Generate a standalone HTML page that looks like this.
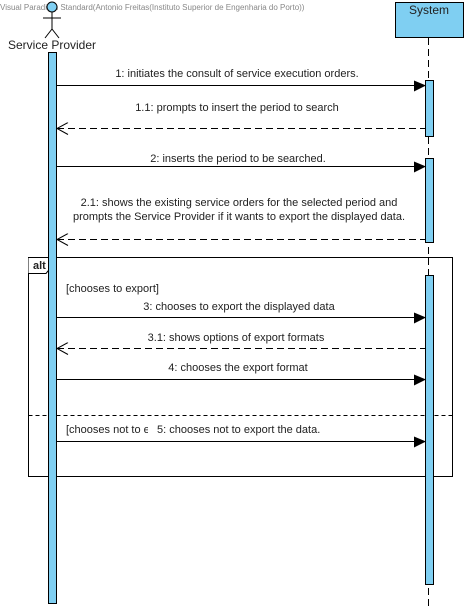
<!DOCTYPE html>
<html><head><meta charset="utf-8"><style>
html,body{margin:0;padding:0;background:#fff;width:468px;height:608px;overflow:hidden}
svg{display:block}
text{font-family:"Liberation Sans",sans-serif;font-size:11px;fill:#222}
</style></head><body>
<svg width="468" height="608" viewBox="0 0 468 608" xmlns="http://www.w3.org/2000/svg">
<defs>
<marker id="f" markerWidth="12" markerHeight="12" refX="11" refY="5" orient="auto" markerUnits="userSpaceOnUse"><path d="M0,0 L12,5 L0,11 Z" fill="#000"/></marker>
<marker id="o" markerWidth="14" markerHeight="14" refX="1" refY="6" orient="auto" markerUnits="userSpaceOnUse"><path d="M12,0 L1,6 L12,12" fill="none" stroke="#000"/></marker>
</defs>
<text x="0" y="10" style="font-size:8px;fill:#888">Visual Paradigm Standard(Antonio Freitas(Instituto Superior de Engenharia do Porto))</text>
<!-- actor -->
<circle cx="52" cy="7" r="5" fill="#7fcff2" stroke="#000"/>
<line x1="52" y1="12" x2="52" y2="29" stroke="#000"/>
<line x1="43" y1="18" x2="61" y2="18" stroke="#000"/>
<line x1="52" y1="29" x2="45" y2="38" stroke="#000"/>
<line x1="52" y1="29" x2="59" y2="38" stroke="#000"/>
<text x="52" y="49" text-anchor="middle" style="font-size:12px">Service Provider</text>
<!-- system -->
<rect x="395.5" y="2.5" width="68" height="35" fill="#7fcff2" stroke="#000"/>
<text x="429" y="14" text-anchor="middle" style="font-size:12px">System</text>
<line x1="428.5" y1="38" x2="428.5" y2="608" stroke="#000" stroke-dasharray="7,4"/>
<!-- alt frame -->
<rect x="28.5" y="257.5" width="424" height="219" fill="none" stroke="#000"/>
<path d="M28.5,257.5 H50.5 V268 L46,273.5 H28.5" fill="#fff" stroke="#000"/>
<text x="33" y="269" style="font-weight:bold">alt</text>
<line x1="28.5" y1="415.5" x2="452.5" y2="415.5" stroke="#000" stroke-dasharray="4,3"/>
<!-- activations -->
<rect x="48.5" y="52.5" width="8" height="551" fill="#7fcff2" stroke="#000"/>
<rect x="425.5" y="80.5" width="8" height="56" fill="#7fcff2" stroke="#000"/>
<rect x="425.5" y="158.5" width="8" height="84" fill="#7fcff2" stroke="#000"/>
<rect x="425.5" y="275.5" width="8" height="309" fill="#7fcff2" stroke="#000"/>
<!-- messages -->
<line x1="57" y1="85.5" x2="425" y2="85.5" stroke="#000" marker-end="url(#f)"/>
<text x="237" y="77" text-anchor="middle">1: initiates the consult of service execution orders.</text>
<line x1="57" y1="128.5" x2="425" y2="128.5" stroke="#000" stroke-dasharray="7,4" marker-start="url(#o)"/>
<text x="237" y="111" text-anchor="middle">1.1: prompts to insert the period to search</text>
<line x1="57" y1="166.5" x2="425" y2="166.5" stroke="#000" marker-end="url(#f)"/>
<text x="238" y="162" text-anchor="middle">2: inserts the period to be searched.</text>
<text x="239" y="206" text-anchor="middle">2.1: shows the existing service orders for the selected period and</text>
<text x="239" y="220" text-anchor="middle">prompts the Service Provider if it wants to export the displayed data.</text>
<line x1="57" y1="239.5" x2="425" y2="239.5" stroke="#000" stroke-dasharray="7,4" marker-start="url(#o)"/>
<text x="66" y="292">[chooses to export]</text>
<line x1="57" y1="317.5" x2="425" y2="317.5" stroke="#000" marker-end="url(#f)"/>
<text x="239" y="310" text-anchor="middle">3: chooses to export the displayed data</text>
<line x1="57" y1="348.5" x2="425" y2="348.5" stroke="#000" stroke-dasharray="7,4" marker-start="url(#o)"/>
<text x="236" y="341" text-anchor="middle">3.1: shows options of export formats</text>
<line x1="57" y1="379.5" x2="425" y2="379.5" stroke="#000" marker-end="url(#f)"/>
<text x="238" y="371" text-anchor="middle">4: chooses the export format</text>
<text x="66" y="433">[chooses not to e</text>
<rect x="148" y="423" width="8" height="13" fill="#fff"/>
<text x="157" y="433">5: chooses not to export the data.</text>
<line x1="57" y1="441.5" x2="425" y2="441.5" stroke="#000" marker-end="url(#f)"/>
</svg>
</body></html>
